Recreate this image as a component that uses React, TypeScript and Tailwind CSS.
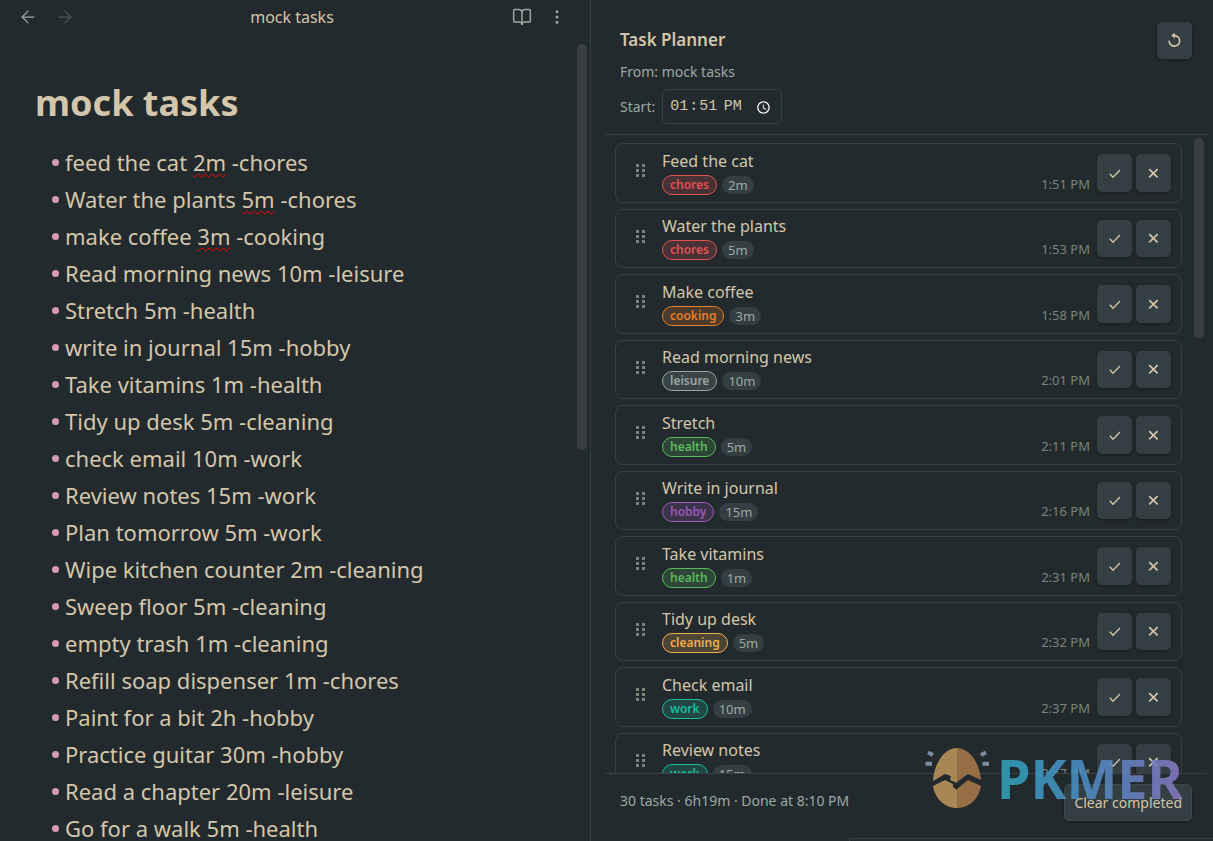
import { ArrowLeft, ArrowRight, BookOpen, EllipsisVertical } from "lucide-react";
import type { ReactNode } from "react";

type Note = { text: string; typo?: string; rest?: string };

const notes: Note[] = [
  { text: "feed the cat ", typo: "2m", rest: " -chores" },
  { text: "Water the plants ", typo: "5m", rest: " -chores" },
  { text: "make coffee ", typo: "3m", rest: " -cooking" },
  { text: "Read morning news 10m -leisure" },
  { text: "Stretch 5m -health" },
  { text: "write in journal 15m -hobby" },
  { text: "Take vitamins 1m -health" },
  { text: "Tidy up desk 5m -cleaning" },
  { text: "check email 10m -work" },
  { text: "Review notes 15m -work" },
  { text: "Plan tomorrow 5m -work" },
  { text: "Wipe kitchen counter 2m -cleaning" },
  { text: "Sweep floor 5m -cleaning" },
  { text: "empty trash 1m -cleaning" },
  { text: "Refill soap dispenser 1m -chores" },
  { text: "Paint for a bit 2h -hobby" },
  { text: "Practice guitar 30m -hobby" },
  { text: "Read a chapter 20m -leisure" },
  { text: "Go for a walk 5m -health" },
];

const tagStyles: Record<string, string> = {
  chores: "border-[#e05252] bg-[#493236] text-[#e05252]",
  cooking: "border-[#e67e22] bg-[#4a3b2c] text-[#e67e22]",
  leisure: "border-[#95a5a6] bg-[#3a4346] text-[#95a5a6]",
  health: "border-[#5cb85c] bg-[#2e4637] text-[#5cb85c]",
  hobby: "border-[#9b59b6] bg-[#3b3349] text-[#9b59b6]",
  cleaning: "border-[#f0ad4e] bg-[#4c4434] text-[#f0ad4e]",
  work: "border-[#1abc9c] bg-[#214744] text-[#1abc9c]",
};

const tasks = [
  { title: "Feed the cat", tag: "chores", length: "2m", time: "1:51 PM" },
  { title: "Water the plants", tag: "chores", length: "5m", time: "1:53 PM" },
  { title: "Make coffee", tag: "cooking", length: "3m", time: "1:58 PM" },
  { title: "Read morning news", tag: "leisure", length: "10m", time: "2:01 PM" },
  { title: "Stretch", tag: "health", length: "5m", time: "2:11 PM" },
  { title: "Write in journal", tag: "hobby", length: "15m", time: "2:16 PM" },
  { title: "Take vitamins", tag: "health", length: "1m", time: "2:31 PM" },
  { title: "Tidy up desk", tag: "cleaning", length: "5m", time: "2:32 PM" },
  { title: "Check email", tag: "work", length: "10m", time: "2:37 PM" },
  { title: "Review notes", tag: "work", length: "15m", time: "2:47 PM" },
];

function CheckGlyph() {
  return (
    <svg className="size-4" viewBox="0 0 16 16" fill="none" stroke="currentColor" strokeWidth="1.3">
      <path d="M2.8 8.8l3.2 3.4L13 5" />
    </svg>
  );
}

function CrossGlyph() {
  return (
    <svg className="size-4" viewBox="0 0 16 16" fill="none" stroke="currentColor" strokeWidth="1.7">
      <path d="M3.2 4.2l8.4 8.2M11.6 4.2l-8.4 8.2" />
    </svg>
  );
}

function ResetGlyph() {
  return (
    <svg className="size-4" viewBox="0 0 16 16" fill="none" stroke="currentColor" strokeWidth="1.6">
      <path d="M2.1 7.6A5.3 5.3 0 1 0 8 2.6H6.6" />
      <path d="M7.8-.2v5.6L4.300 2.600z" fill="currentColor" stroke="none" />
    </svg>
  );
}

function GripGlyph() {
  return (
    <svg className="h-4 w-3" viewBox="0 0 12 16" fill="#7a8478">
      {[1, 6, 11].map((y) => (
        <g key={y}>
          <rect x="1" y={y} width="3" height="3" />
          <rect x="7" y={y} width="3" height="3" />
        </g>
      ))}
    </svg>
  );
}

function TaskButton({ label, children }: { label: string; children: ReactNode }) {
  return (
    <button
      type="button"
      aria-label={label}
      className="flex w-[35px] items-center justify-center rounded-[5px] bg-[#343f44] py-[9px] text-[13px] leading-normal shadow-[0_1px_3px_rgba(0,0,0,0.35)]"
    >
      <span className="flex h-[1lh] items-center">{children}</span>
    </button>
  );
}

function Watermark() {
  return (
    <svg
      className="pointer-events-none absolute top-[744px] right-[23px] h-[68px] w-[268px]"
      viewBox="0 0 268 68"
      aria-hidden="true"
    >
      <defs>
        <linearGradient id="brand" gradientUnits="userSpaceOnUse" x1="78" y1="0" x2="266" y2="0">
          <stop offset="0" stopColor="#2fa3bd" />
          <stop offset="0.45" stopColor="#4c8cc4" />
          <stop offset="0.75" stopColor="#6a7fc0" />
          <stop offset="1" stopColor="#9076c0" />
        </linearGradient>
      </defs>
      <g opacity="0.9">
        <path d="M35 4C22 4 12 20 11 37l12-7 6 2-1 4 7 3z" fill="#b8925a" />
        <path d="M35 4c13 0 23 16 24 32l-13-6-11 8z" fill="#a37648" />
        <path d="M11 42l12-6 8 4 0 3 4 3v18C22 64 13 54 11 42z" fill="#b8925a" />
        <path d="M35 45l11-9 13 6C57 54 48 64 35 64z" fill="#a37648" />
        <path
          d="M6 8.500l5 2.600M3.500 19.800h6.500M59 11.100l5-2.600M60.500 19.800h6.500"
          stroke="#91a8bd"
          strokeWidth="4"
          opacity="0.9"
        />
      </g>
      <text
        x="75"
        y="55"
        fontSize="54"
        fontWeight="700"
        fill="url(#brand)"
        fontFamily="Noto Sans, sans-serif"
        opacity="0.88"
      >
        PKMER
      </text>
    </svg>
  );
}

export default function App() {
  return (
    <div className="relative flex h-screen overflow-hidden bg-[#232a2e] font-['Noto_Sans',sans-serif] text-[#d3c6aa]">
      <section className="flex w-[591px] shrink-0 flex-col border-r border-[#374145]">
        <header className="flex h-[34px] shrink-0 items-center pr-[24px] pl-[18px] text-[#9da9a0]">
          <div className="flex flex-1 gap-[17px]">
            <button type="button" aria-label="Back">
              <ArrowLeft size={20} strokeWidth={1.5} />
            </button>
            <button type="button" aria-label="Forward" className="opacity-35">
              <ArrowRight size={20} strokeWidth={1.5} />
            </button>
          </div>
          <span className="text-[16px] text-[#d3c6aa]">mock tasks</span>
          <div className="flex flex-1 items-center justify-end gap-4">
            <button type="button" aria-label="Reading view">
              <BookOpen size={20} strokeWidth={1.75} />
            </button>
            <button type="button" aria-label="More options">
              <EllipsisVertical size={18} strokeWidth={2} />
            </button>
          </div>
        </header>
        <div className="flex min-h-0 flex-1 pr-[3px]">
          <div className="min-w-0 flex-1 overflow-hidden pt-11 pl-[35px]">
            <h1 className="text-[36px] leading-[50px] font-bold">mock tasks</h1>
            <ul className="mt-4 pl-[17px]">
              {notes.map((note) => (
                <li key={note.text} className="flex items-center gap-[6px] text-[22px] leading-[37px] whitespace-nowrap">
                  <span className="size-[7px] rounded-full bg-[#d699b6]" />
                  <span>
                    {note.text}
                    {note.typo && (
                      <span className="underline decoration-[#ff0000] decoration-wavy decoration-1 underline-offset-2">
                        {note.typo}
                      </span>
                    )}
                    {note.rest}
                  </span>
                </li>
              ))}
            </ul>
          </div>
          <div className="w-[10px] pt-[10px]">
            <div className="h-[406px] rounded-full bg-[#3a4042]" />
          </div>
        </div>
      </section>

      <section className="flex min-w-0 flex-1 flex-col">
        <div className="mr-[6px] ml-[14px] flex min-h-0 flex-1 flex-col">
          <header className="flex shrink-0 items-start justify-between border-b border-[#374145] pt-[22px] pr-[15px] pb-[10px] pl-[15px]">
            <div>
              <h2 className="text-[17px] leading-[36px] font-semibold">Task Planner</h2>
              <p className="text-[14px] leading-[28px] text-[#9da9a0]">From: mock tasks</p>
              <div className="mt-[3px] flex items-center gap-[7px]">
                <label htmlFor="start" className="text-[14px] text-[#9da9a0]">
                  Start:
                </label>
                <input
                  id="start"
                  type="time"
                  defaultValue="13:51"
                  className="h-[35px] w-[120px] rounded-[5px] border border-[#374145] bg-transparent px-[6px] pt-[2px] font-['Liberation_Mono',monospace] text-[15px] [color-scheme:dark]"
                />
              </div>
            </div>
            <button
              type="button"
              aria-label="Refresh"
              className="flex h-[37px] w-[35px] items-center justify-center rounded-[5px] bg-[#343f44] shadow-[0_1px_3px_rgba(0,0,0,0.35)]"
            >
              <ResetGlyph />
            </button>
          </header>

          <div className="flex min-h-0 flex-1 justify-between gap-3 overflow-hidden pr-[3px] pl-[10px]">
            <ul className="flex min-w-0 flex-1 flex-col gap-[6px] pt-2">
              {tasks.map((task) => (
                <li
                  key={task.title}
                  className="flex shrink-0 items-center rounded-[8px] border border-[#374145] py-[10px] pr-[10px] pl-[19px]"
                >
                  <span className="mb-[3px] cursor-grab">
                    <GripGlyph />
                  </span>
                  <div className="ml-[15px] flex h-9 min-w-0 flex-1 flex-col justify-center gap-1">
                    <span className="text-[16px] leading-[20px]">{task.title}</span>
                    <span className="flex items-center gap-[5px] text-[13px] leading-[18px]">
                      <span className={`rounded-full border px-[7px] text-[12px] font-semibold ${tagStyles[task.tag]}`}>
                        {task.tag}
                      </span>
                      <span className="rounded-full bg-[#343f44] px-[6px] text-[#9da9a0]">{task.length}</span>
                    </span>
                  </div>
                  <span className="self-end text-[13px] leading-[16px] text-[#7a8478]">{task.time}</span>
                  <div className="ml-[7px] flex gap-1">
                    <TaskButton label="Complete task">
                      <CheckGlyph />
                    </TaskButton>
                    <TaskButton label="Remove task">
                      <CrossGlyph />
                    </TaskButton>
                  </div>
                </li>
              ))}
            </ul>
            <div className="w-[10px] pt-[3px]">
              <div className="h-[200px] rounded-full bg-[#3a4042]" />
            </div>
          </div>

          <footer className="flex h-[65px] shrink-0 items-start justify-between border-t border-[#374145] pt-[10px] pr-[15px] pl-[15px]">
            <p className="text-[14px] leading-[34px] text-[#9da9a0]">30 tasks · 6h19m · Done at 8:10 PM</p>
            <button
              type="button"
              className="h-[37px] rounded-[5px] border border-[#3d484d] bg-[#343f44] px-[9px] text-[14px] shadow-[0_1px_3px_rgba(0,0,0,0.35)]"
            >
              Clear completed
            </button>
          </footer>
        </div>
        <div className="ml-[258px] h-[3px] shrink-0 rounded-tl-[8px] border-t border-l border-[#374145]" />
      </section>
      <Watermark />
    </div>
  );
}
